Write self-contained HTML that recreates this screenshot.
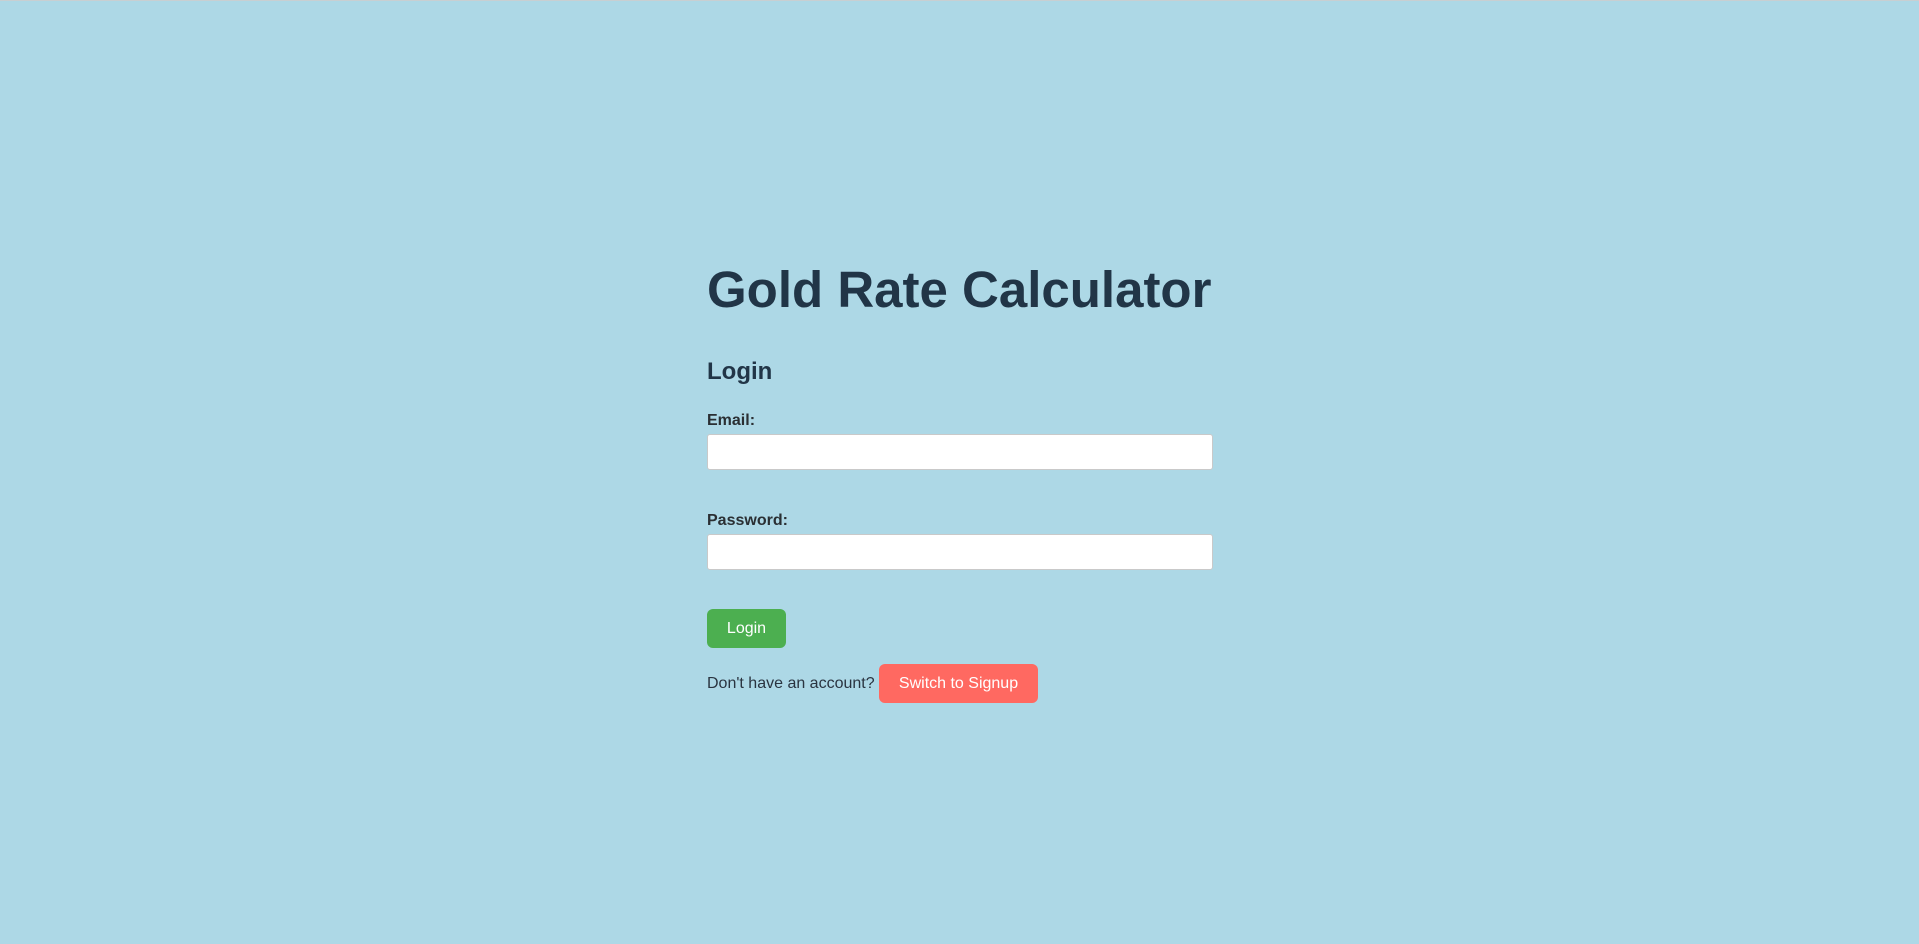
<!DOCTYPE html>
<html><head><meta charset="utf-8"><style>
html,body{margin:0;padding:0}
body{width:1919px;height:944px;background:#add8e6;border-top:1px solid #c8cfd2;box-sizing:border-box;position:relative;overflow:hidden;font-family:"Liberation Sans",Arial,sans-serif;color:#213547}
.a{position:absolute;white-space:nowrap}
h1{position:absolute;left:707px;top:254px;margin:0;font-size:51px;font-weight:bold;line-height:70px;color:#213547}
h2{position:absolute;left:707px;top:356px;margin:0;font-size:24px;font-weight:bold;line-height:30px;color:#213547}
label{position:absolute;left:707px;font-size:16px;font-weight:bold;line-height:20px;color:#2a2f33}
.in{position:absolute;left:707px;width:506px;height:36px;box-sizing:border-box;background:#fff;border:1px solid #c9c9c9;border-radius:3px}
.btn{position:absolute;color:#fff;font-size:16px;text-align:center;border-radius:6px}
</style></head><body>
<h1>Gold Rate Calculator</h1>
<h2>Login</h2>
<label style="top:410px">Email:</label>
<div class="in" style="top:433px"></div>
<label style="top:510px">Password:</label>
<div class="in" style="top:533px"></div>
<div class="btn" style="left:707px;top:608px;width:79px;height:39px;line-height:39px;background:#4caf50">Login</div>
<div class="a" style="left:707px;top:673px;font-size:16px;line-height:20px;color:#2a3440">Don't have an account?</div>
<div class="btn" style="left:879px;top:663px;width:159px;height:39px;line-height:39px;background:#ff6961">Switch to Signup</div>
</body></html>
